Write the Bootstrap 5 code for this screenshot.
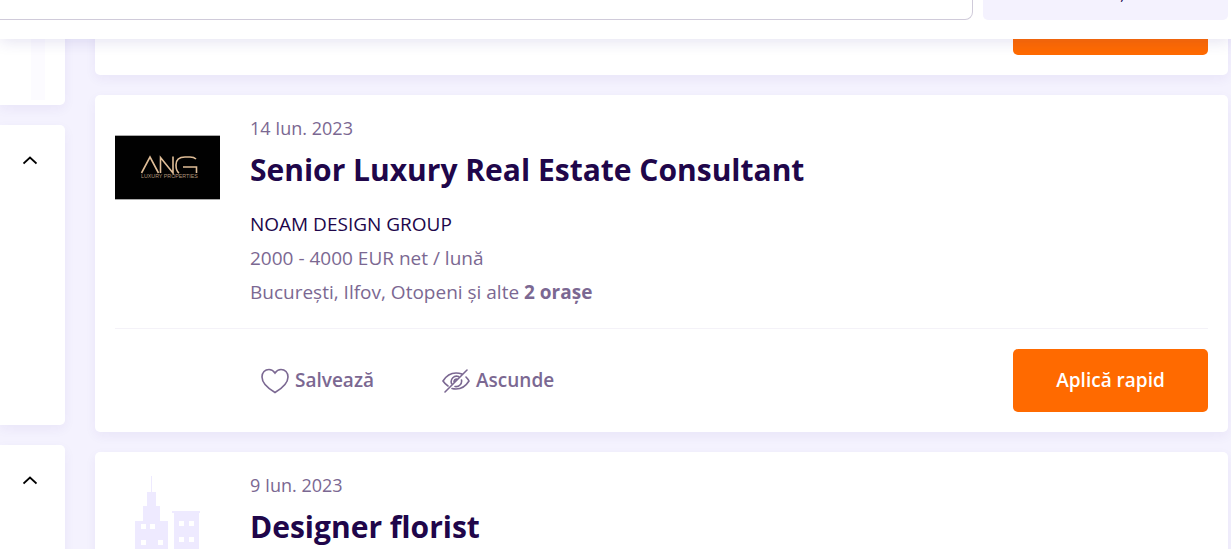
<!DOCTYPE html>
<html lang="ro">
<head>
<meta charset="utf-8">
<meta name="viewport" content="width=device-width, initial-scale=1">
<title>Locuri de muncă</title>
<link href="https://cdn.jsdelivr.net/npm/bootstrap@5.3.0/dist/css/bootstrap.min.css" rel="stylesheet">
<style>
  body { background: #f4f2fe; color: #7b6892; font-family: "Open Sans", "Noto Sans", sans-serif; font-size: 19px; font-weight: 400; line-height: 34px; overflow: hidden; }
  .top-bar { background: #fff; box-shadow: 0 2px 16px rgba(60, 40, 150, .14); height: 39px; overflow: hidden; padding: 0 3px 19px 0; gap: 10px; }
  .top-bar .form-control { height: 58px; border-color: #d0cbda; border-radius: 0 8px 8px 0; border-left: 0; }
  .top-bar .btn { width: 245px; height: 58px; flex: none; background: #f4f2fe; border: 0; border-radius: 5px; color: #20064a; font-size: 19px; }
  .page { height: 100vh; overflow: hidden; padding-right: 3px; gap: 30px; }
  .side { width: 65px; flex: none; }
  .stack { gap: 20px; }
  .panel { background: #fff; border-radius: 5px; box-shadow: 0 4px 12px rgba(60, 40, 150, .06); flex: none; }
  .side .panel { border-radius: 0 5px 5px 0; height: 300px; padding: 20px 15px; }
  .side .panel:first-child { height: 105px; }
  .scroll-track { background: #fcfbff; width: 14px; height: 80px; margin-left: 16px; }
  .toggle { display: flex; align-items: center; justify-content: center; width: 30px; height: 30px; }
  .previous { height: 75px; overflow: hidden; padding: 20px; }
  .job { padding: 20px; }
  .logo-box { width: 105px; margin: 20px 30px 0 0; flex: none; }
  .placeholder-logo { margin-top: 4px; }
  .date { font-size: 18px; line-height: 26px; }
  .job h2 { font-size: 30px; line-height: 40px; font-weight: 700; margin: 9px 0 17px; }
  .job h2 a, .company { color: #20064a; text-decoration: none; }
  .company { font-weight: 500; }
  .job-actions { border-top: 1px solid #f4f2f8; margin-top: 19px; padding-top: 20px; }
  .quick { width: 195px; height: 63px; background: #ff6a00; border-radius: 5px; color: #fff; font-size: 19px; font-weight: 600; border: 0; }
  .quick:hover { background: #e86000; color: #fff; }
  .tool { color: #7b6892; font-size: 19px; font-weight: 600; gap: 6px; padding: 0; border: 0; }
  .tools { padding-left: 146px; gap: 68px; }
</style>
</head>
<body>
<header class="top-bar fixed-top d-flex align-items-end">
  <input class="form-control" type="search" aria-label="Caută un loc de muncă">
  <button class="btn" type="button">Oraş</button>
</header>
<main class="page d-flex">
  <aside class="side stack d-flex flex-column">
    <div class="panel"><div class="scroll-track"></div></div>
    <div class="panel"><button class="btn toggle p-0 border-0" type="button" aria-label="Restrânge filtrul"><svg width="14" height="9" viewBox="0 0 14 9" fill="none" stroke="#000" stroke-width="1.800"><path d="M.5 7.500L7 1.500l6.500 6"/></svg></button></div>
    <div class="panel"><button class="btn toggle p-0 border-0" type="button" aria-label="Restrânge filtrul"><svg width="14" height="9" viewBox="0 0 14 9" fill="none" stroke="#000" stroke-width="1.800"><path d="M.5 7.500L7 1.500l6.500 6"/></svg></button></div>
  </aside>
  <section class="stack d-flex flex-column flex-grow-1">
    <div class="panel previous d-flex align-items-end justify-content-end"><button class="btn quick flex-shrink-0" type="button" aria-label="Aplică rapid"></button></div>
    <article class="panel job">
      <div class="d-flex">
        <div class="logo-box">
          <svg class="d-block" width="105" height="65" viewBox="0 0 105 65" role="img" aria-label="ANG Luxury Properties">
            <path fill="#010101" d="M0 0h105v65H0z"/><path stroke="#aaa" d="M0 .5h105M0 64.500h105"/>
            <g fill="none" stroke="#dfbd97" stroke-width="1.600"><path d="M26.500 38L35 22l8.500 16M45.500 38V22.500L58 38V21.500M81 24q-2-2-6-2h-5q-9 0-9 8 0 6 3 8M68 32h13.500v6"/></g>
            <text x="26" y="43" fill="#b0967a" font-size="5.300" font-weight="400" font-family="Liberation Sans, sans-serif">LUXURY PROPERTIES</text>
          </svg>
        </div>
        <div>
          <div class="date">14 Iun. 2023</div>
          <h2><a href="#">Senior Luxury Real Estate Consultant</a></h2>
          <div><a class="company" href="#">NOAM DESIGN GROUP</a></div>
          <div>2000 - 4000 EUR net / lună</div>
          <div>Bucureşti, Ilfov, Otopeni şi alte <b>2 oraşe</b></div>
        </div>
      </div>
      <div class="job-actions d-flex align-items-center justify-content-between">
        <div class="tools d-flex">
          <button class="btn tool d-flex align-items-center" type="button">
            <svg width="28" height="26" viewBox="0 0 28 26" fill="none" stroke="#7b6892" stroke-width="1.600"><path d="M14 5C12 2 10.500 1.500 8 1.500 4 1.500 1 4.500 1 9c0 5 4.500 10.500 13 15.500C22.500 19.500 27 14 27 9c0-4.500-3-7.500-7-7.500-2.500 0-4 .5-6 3.500z"/></svg>Salvează</button>
          <button class="btn tool d-flex align-items-center" type="button">
            <svg width="28" height="24" viewBox="0 0 28 24" fill="none" stroke="#7b6892" stroke-width="1.600" stroke-linecap="round"><path d="M3 23L25 1M6 17q-3-2-5-5Q6 4 14 4q3 0 6 1M24 8q2 2 3 4-5 8-13 8-2 0-4-.5M9.500 14.500a5.500 5.500 0 0 1 7-7M19.500 11a5.500 5.500 0 0 1-6.500 6.500M12 13q0-3 3-3"/></svg>Ascunde</button>
        </div>
        <button class="btn quick" type="button">Aplică rapid</button>
      </div>
    </article>
    <article class="panel job">
      <div class="d-flex">
        <div class="logo-box placeholder-logo d-flex justify-content-center">
          <svg class="d-block flex-shrink-0" width="66" height="96" viewBox="0 0 66 96" role="img" aria-label="Companie"><path fill="#eeeaff" fill-rule="evenodd" d="M16 0h1v16h4v14h4v15h8v51H0V45h8V30h4V16h4zM6 48v5h5v-5zm9 0v5h5v-5zM6 64v5h5v-5zm17 0v5h5v-5zM37 35h28v2h-1v59H39V37h-2zM44 45v5h5v-5zm10 0v5h5v-5zM44 61v5h5v-5zm10 0v5h5v-5z"/></svg>
        </div>
        <div>
          <div class="date">9 Iun. 2023</div>
          <h2><a href="#">Designer florist</a></h2>
        </div>
      </div>
    </article>
  </section>
</main>
<script src="https://cdn.jsdelivr.net/npm/bootstrap@5.3.0/dist/js/bootstrap.bundle.min.js"></script>
</body>
</html>
